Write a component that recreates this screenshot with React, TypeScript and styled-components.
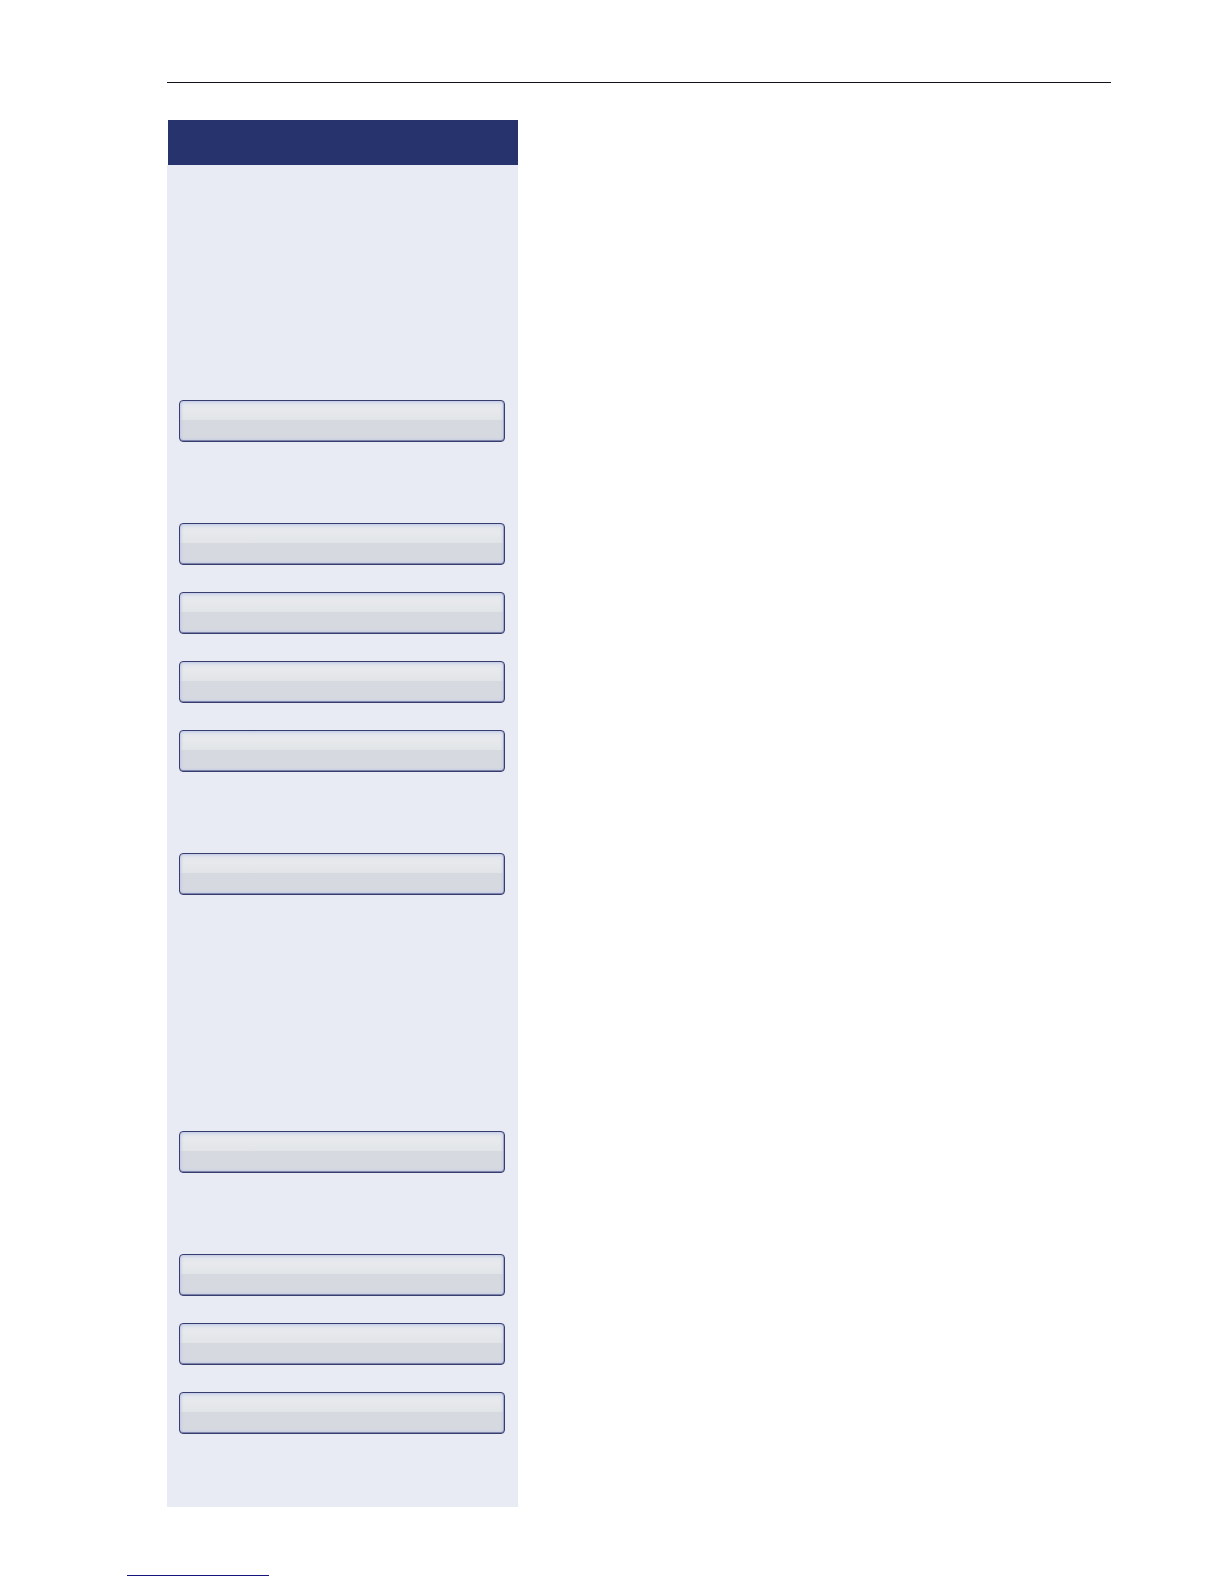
import React from "react";
import styled, { createGlobalStyle } from "styled-components";

const GlobalStyle = createGlobalStyle`
  *, *::before, *::after {
    box-sizing: border-box;
  }

  body {
    margin: 0;
    background: #ffffff;
    font-family: "Liberation Sans", Arial, sans-serif;
  }
`;

const Page = styled.div`
  display: flex;
  flex-direction: column;
  min-height: 100vh;
  padding: 82px 113px 8px 127px;
`;

const Content = styled.main`
  display: flex;
  flex-direction: column;
  gap: 37px;
  padding-left: 40px;
`;

const TopRule = styled.hr`
  width: 100%;
  height: 1px;
  margin: 0;
  border: 0;
  background: #12121c;
`;

const Panel = styled.aside`
  width: 100%;
  max-width: 351px;
  background: #e8ebf4;
`;

const PanelHeader = styled.header`
  height: 45px;
  border-left: 1px solid #ffffff;
  background: #26336d;
`;

const PanelBody = styled.div`
  display: flex;
  flex-direction: column;
  gap: 236px;
  padding: 235px 13px 73px 12px;
`;

const Section = styled.section`
  display: flex;
  flex-direction: column;
  gap: 81px;
`;

const KeyGroup = styled.div`
  display: flex;
  flex-direction: column;
  gap: 27px;
`;

const Key = styled.button`
  display: block;
  width: 100%;
  height: 42px;
  padding: 0;
  border: 1px solid #383d70;
  border-radius: 4px;
  background: linear-gradient(
    #e0e4ec 0%,
    #e7e9ec 20%,
    #e2e5e8 47%,
    #d6d9e0 48%,
    #d6d9e0 100%
  );
  box-shadow:
    inset 0 -1px 0 #7d83a8,
    inset -1px 0 0 #a0a8cb,
    inset 0 0 3px 1px #bcc6e6;
  cursor: pointer;
`;

const Footer = styled.footer`
  display: flex;
  margin-top: auto;
`;

const FooterLink = styled.a`
  display: block;
  width: 142px;
  border-bottom: 1px solid #14147c;
`;

const sections = [
  { id: "upper", groups: [1, 4, 1] },
  { id: "lower", groups: [1, 3] },
];

export default function App() {
  return (
    <>
      <GlobalStyle />
      <Page>
        <Content>
          <TopRule />
          <Panel>
            <PanelHeader />
            <PanelBody>
              {sections.map((section) => (
                <Section key={section.id}>
                  {section.groups.map((count, group) => (
                    <KeyGroup key={group}>
                      {Array.from({ length: count }, (_, key) => (
                        <Key key={key} type="button" />
                      ))}
                    </KeyGroup>
                  ))}
                </Section>
              ))}
            </PanelBody>
          </Panel>
        </Content>
        <Footer>
          <FooterLink href="#top" />
        </Footer>
      </Page>
    </>
  );
}
